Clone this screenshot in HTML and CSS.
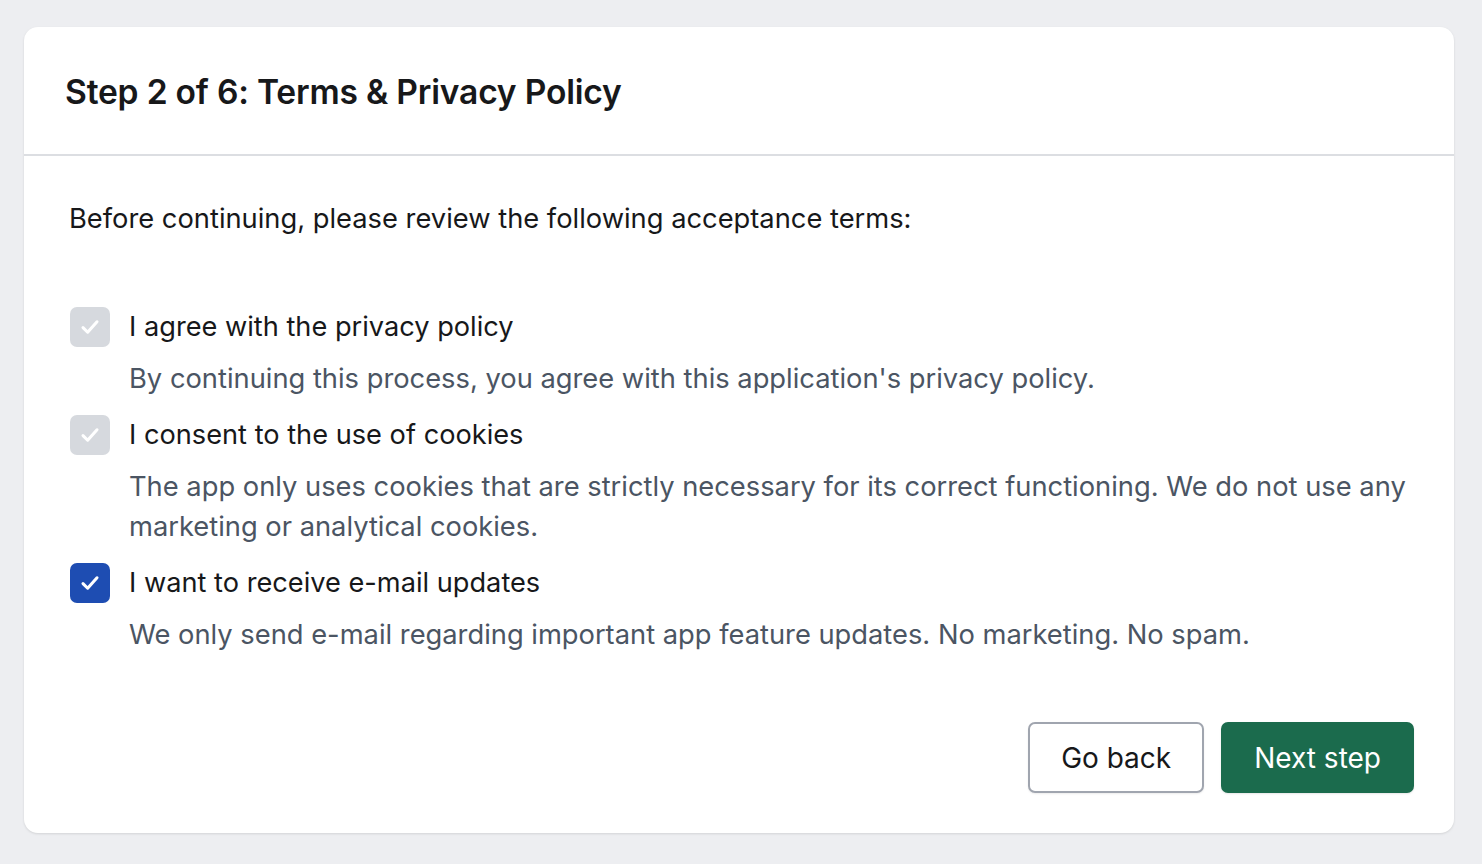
FILE: index.html
```html
<!DOCTYPE html>
<html lang="en">
<head>
<meta charset="utf-8">
<title>Step 2 of 6: Terms &amp; Privacy Policy</title>
<link rel="stylesheet" href="styles.css">
</head>
<body>
<main class="card">
  <header class="card-header">
    <h1 class="title">Step 2 of 6: Terms &amp; Privacy Policy</h1>
  </header>
  <section class="card-body">
    <p class="intro">Before continuing, please review the following acceptance terms:</p>
    <ul class="terms">
      <li class="term">
        <span class="box box-disabled"><svg viewBox="0 0 24 24" class="check"><path d="M6 12.5l4 4 8-9"/></svg></span>
        <div class="term-text">
          <div class="term-label">I agree with the privacy policy</div>
          <div class="term-desc">By continuing this process, you agree with this application's privacy policy.</div>
        </div>
      </li>
      <li class="term">
        <span class="box box-disabled"><svg viewBox="0 0 24 24" class="check"><path d="M6 12.5l4 4 8-9"/></svg></span>
        <div class="term-text">
          <div class="term-label">I consent to the use of cookies</div>
          <div class="term-desc">The app only uses cookies that are strictly necessary for its correct functioning. We do not use any marketing or analytical cookies.</div>
        </div>
      </li>
      <li class="term">
        <span class="box box-checked"><svg viewBox="0 0 24 24" class="check"><path d="M6 12.5l4 4 8-9"/></svg></span>
        <div class="term-text">
          <div class="term-label">I want to receive e-mail updates</div>
          <div class="term-desc">We only send e-mail regarding important app feature updates. No marketing. No spam.</div>
        </div>
      </li>
    </ul>
    <div class="actions">
      <button class="btn btn-secondary" type="button">Go back</button>
      <button class="btn btn-primary" type="button">Next step</button>
    </div>
  </section>
</main>
</body>
</html>
```
FILE: styles.css
```css
* { box-sizing: border-box; }
html, body { margin: 0; padding: 0; }
body {
  background: #edeef1;
  font-family: Inter, "Noto Sans", "Liberation Sans", sans-serif;
  color: #17181a;
  padding: 27px 28px 32px 24px;
}
.card {
  background: #fff;
  border-radius: 14px;
  box-shadow: 0 1px 3px rgba(0,0,0,0.08), 0 1px 2px rgba(0,0,0,0.04);
  overflow: hidden;
}
.card-header {
  height: 129px;
  border-bottom: 2px solid #dcdee2;
  display: flex;
  align-items: center;
  padding: 0 41px;
}
.title {
  margin: 0;
  font-size: 33.6px;
  font-weight: 600;
  letter-spacing: -0.2px;
  line-height: 40px;
  padding-top: 2px;
}
.card-body {
  padding: 43px 40px 40px 45px;
}
.intro {
  margin: 0;
  font-size: 27.3px;
  line-height: 40px;
}
.terms {
  list-style: none;
  margin: 68px 0 0 0;
  padding: 0;
  display: flex;
  flex-direction: column;
  gap: 16px;
}
.term {
  display: flex;
  gap: 19px;
}
.box {
  flex: none;
  width: 40px;
  height: 40px;
  border-radius: 7px;
  margin-left: 1px;
  display: flex;
  align-items: center;
  justify-content: center;
}
.box-disabled { background: #d6d9de; }
.box-checked { background: #1e4db2; }
.check {
  width: 28px;
  height: 28px;
  fill: none;
  stroke: #fff;
  stroke-width: 2.6;
  stroke-linecap: round;
  stroke-linejoin: round;
}
.term-text {
  display: flex;
  flex-direction: column;
  gap: 12px;
}
.term-label {
  font-size: 27.2px;
  line-height: 40px;
  color: #17181a;
}
.term-desc {
  font-size: 27.3px;
  line-height: 40px;
  color: #4b5563;
}
.actions {
  display: flex;
  justify-content: flex-end;
  gap: 17px;
  margin-top: 67px;
}
.btn {
  height: 71px;
  font-family: inherit;
  font-size: 28px;
  border-radius: 7px;
  padding: 0 31px;
  cursor: pointer;
}
.btn-secondary {
  background: #fff;
  color: #17181a;
  border: 2px solid #a0a5af;
  box-shadow: 0 1px 2px rgba(0,0,0,0.08);
}
.btn-primary {
  background: #1b6b4d;
  color: #fff;
  border: 2px solid #1b6b4d;
  box-shadow: 0 1px 2px rgba(0,0,0,0.1);
}
```
